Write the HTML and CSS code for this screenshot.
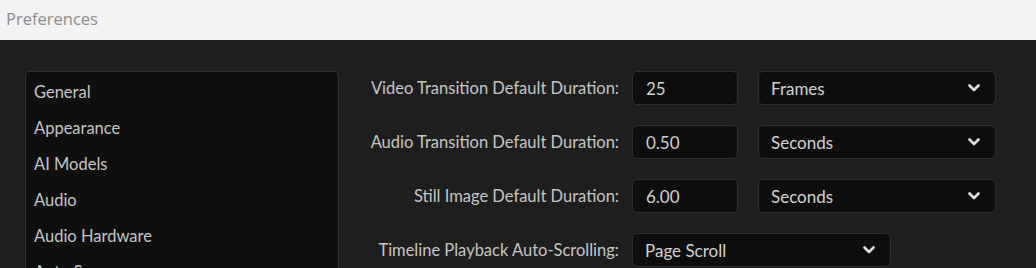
FILE: index.html
```html
<!DOCTYPE html>
<html lang="en">
<head>
    <meta charset="UTF-8">
    <title>Preferences</title>
    <link rel="stylesheet" href="styles.css">
</head>
<body>
    <div class="titlebar">Preferences</div>

    <div class="window">
        <ul class="categories">
            <li>General</li>
            <li>Appearance</li>
            <li>AI Models</li>
            <li>Audio</li>
            <li>Audio Hardware</li>
            <li>Auto Save</li>
            <li>Capture</li>
        </ul>

        <div class="settings">
            <label class="label" for="videoDur">Video Transition Default Duration:</label>
            <input class="field" type="text" id="videoDur" value="25">
            <div class="select">
                <span>Frames</span>
                <svg class="chevron" viewBox="0 0 12 8"><path d="M1.5 1.5 L6 6 L10.5 1.5"/></svg>
            </div>

            <label class="label" for="audioDur">Audio Transition Default Duration:</label>
            <input class="field" type="text" id="audioDur" value="0.50">
            <div class="select">
                <span>Seconds</span>
                <svg class="chevron" viewBox="0 0 12 8"><path d="M1.5 1.5 L6 6 L10.5 1.5"/></svg>
            </div>

            <label class="label" for="stillDur">Still Image Default Duration:</label>
            <input class="field" type="text" id="stillDur" value="6.00">
            <div class="select">
                <span>Seconds</span>
                <svg class="chevron" viewBox="0 0 12 8"><path d="M1.5 1.5 L6 6 L10.5 1.5"/></svg>
            </div>

            <label class="label">Timeline Playback Auto-Scrolling:</label>
            <div class="select wide">
                <span>Page Scroll</span>
                <svg class="chevron" viewBox="0 0 12 8"><path d="M1.5 1.5 L6 6 L10.5 1.5"/></svg>
            </div>
        </div>
    </div>
</body>
</html>
```

FILE: styles.css
```css
html, body {
    margin: 0;
    height: 268px;
    overflow: hidden;
}
body {
    background: #1e1e1e;
    font-family: Lato, "Open Sans", sans-serif;
    font-size: 16.5px;
    color: #c6c6c6;
}
.titlebar {
    height: 40px;
    line-height: 38px;
    padding-left: 6px;
    background: #f2f2f2;
    color: #8c8c8c;
    font-family: "Open Sans", sans-serif;
    font-size: 16.5px;
}
.window {
    display: flex;
    padding: 31px 0 0 25px;
}
.categories {
    list-style: none;
    margin: 0;
    padding: 2px 0 0 8px;
    width: 304px;
    height: 400px;
    background: #0f0f0f;
    border: 1px solid #303030;
    border-radius: 4px;
}
.categories li {
    height: 36px;
    line-height: 36px;
}
.settings {
    display: grid;
    grid-template-columns: 293px 106px 258px;
    grid-auto-rows: 34px;
    row-gap: 20px;
    align-items: center;
}
.label {
    justify-self: end;
    padding-right: 13px;
}
.field, .select {
    box-sizing: border-box;
    height: 34px;
    background: #0e0e0e;
    border: 1px solid #2e2e2e;
    border-radius: 5px;
    color: #d2d2d2;
    font-family: inherit;
    font-size: 17px;
}
.field {
    width: 106px;
    padding: 0 13px;
    outline: none;
}
.select {
    display: flex;
    align-items: center;
    justify-content: space-between;
    margin-left: 20px;
    width: 238px;
    padding: 0 15px 0 12px;
}
.select.wide {
    grid-column: 2 / 4;
    margin-left: 0;
    width: 259px;
}
.chevron {
    width: 12px;
    height: 8px;
    fill: none;
    stroke: #e0e0e0;
    stroke-width: 2.6;
    stroke-linecap: round;
    stroke-linejoin: round;
}
```
